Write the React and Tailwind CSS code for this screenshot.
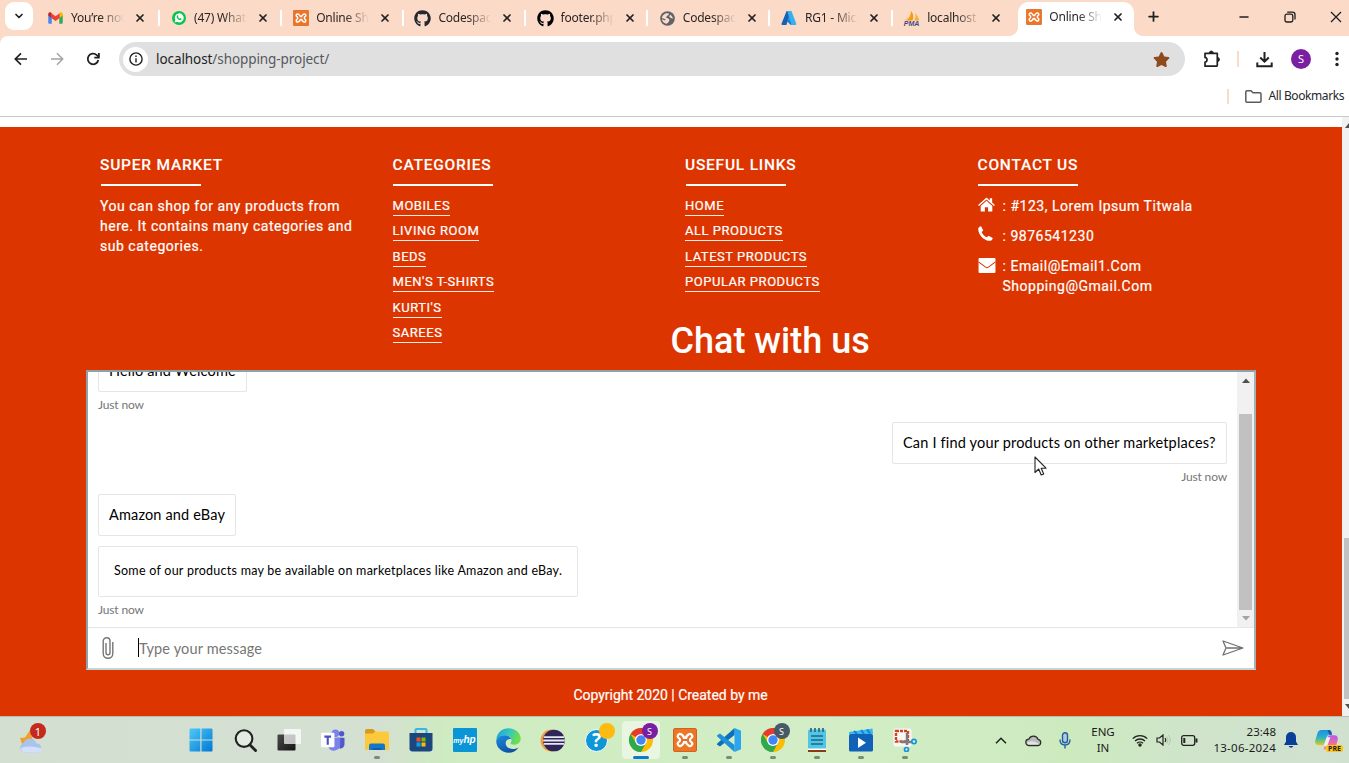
import React from "react";
import { FaGithub, FaStar } from "react-icons/fa";
import { ChevronDown, X, Plus, Minus } from "lucide-react";

/* ---------- brand icons ---------- */

const Gmail = () => (
  <svg viewBox="0 0 16 12" className="h-[12px] w-[15px]">
    <path d="M0.3 2v9a1 1 0 0 0 1 1H4V4.2z" fill="#4285f4" />
    <path d="M15.7 2v9a1 1 0 0 1-1 1H12V4.2z" fill="#34a853" />
    <path d="M12 1.6v4.6l3.7-2.8V1.6C15.7 0 13.6-.5 12.6.3z" fill="#fbbc04" />
    <path d="M0.3 1.6v1.8L4 6.2V1.4L3.4.3C2.4-.5.3 0 .3 1.6z" fill="#c5221f" />
    <path d="M3.6.8L8 4.1 12.4.8V5.9L8 9.2 3.6 5.9z" fill="#ea4335" />
  </svg>
);

const WhatsApp = () => (
  <svg viewBox="0 0 14 14" className="size-[14px]">
    <circle cx="7" cy="7" r="7" fill="#06c54b" />
    <path d="M2.6 11.5l.7-2.5A4.5 4.5 0 1 1 5.1 10.8z" fill="#fff" />
    <path d="M5.2 4.6c.6-.6.9-.3 1.2.7l-.4.7c.4.9 1 1.3 1.7 1.7l.6-.6 1.2.6c0 1.3-1.4 1.6-2.6 1C5.6 8.1 4.8 7 4.7 5.9c0-.6.2-1 .5-1.3z" fill="#06c54b" />
  </svg>
);

const Xampp = ({ className = "size-[16px]" }) => (
  <svg viewBox="0 0 24 24" className={className}>
    <rect x="0.5" y="0.5" width="23" height="23" rx="1.5" fill="#ee7426" stroke="#cf6420" />
    <g fill="none" strokeLinecap="round" strokeLinejoin="round">
      <path d="M7 8.2C10 10 10 14 7 15.8M17 8.2C14 10 14 14 17 15.8M9.300 12h5.400" stroke="#fff" strokeWidth="6.6" />
      <path d="M7 8.2C10 10 10 14 7 15.8M17 8.2C14 10 14 14 17 15.8M9.300 12h5.400" stroke="#e8702a" strokeWidth="2.2" />
    </g>
  </svg>
);

const Globe = () => (
  <svg viewBox="0 0 16 16" className="size-[15px]">
    <circle cx="8" cy="8" r="7.8" fill="#5f6368" />
    <path d="M2 7.5C2.4 4.5 5 2.3 8 2.3c1.6 0 2 .8 1.2 1.8L7.5 5.3 6.3 6.8 8.8 8l1.4 1.3-1 2.3-2 1.9C4.3 13 2.3 11 2 8.7L5.3 10 6 8.8z" fill="#fbdccb" />
    <path d="M11 3.6l2.3 2.7.3 2-2-.8-1.8-1.3z" fill="#fbdccb" />
  </svg>
);

const Azure = () => (
  <svg viewBox="0 0 16 16" className="size-[16px]">
    <path d="M5.6 1h4.6L5.4 15H1.3A.9.9 0 0 1 .5 13.8z" fill="#1464b4" />
    <path d="M12 10H5.2l4.3 4.7 2.8.3z" fill="#0b66c3" />
    <path d="M6.2 1h4.2l4.9 12.8a.9.9 0 0 1-.8 1.2h-4.2z" fill="#35b1f0" />
    <path d="M6.8 1.5L8 7.5 6.500 10.500 10 13.500" fill="#1d8be0" />
  </svg>
);

const Pma = () => (
  <span className="flex h-[15px] w-[17px] flex-col items-center">
    <svg viewBox="0 0 16 10" className="h-[10px] w-[16px]">
      <path d="M7 0c3 3 2.5 7 1.500 9.500H2.500C5 7.500 7 4 7 0z" fill="#f89c0e" />
      <path d="M11.500 2c2 2.500 3 5 4 7.500H10c1.500-2 1.800-5 1.500-7.500z" fill="#fbb03b" />
      <path d="M4.500 3c0 3-1 5-4 6.500h3z" fill="#f9b65a" />
    </svg>
    <span className="font-['Liberation_Sans'] text-[7px] font-bold italic leading-[5px] text-[#3c4a86]">PMA</span>
  </span>
);

/* ---------- browser chrome ---------- */

const TABS = [
  { icon: <Gmail />, title: "You’re now" },
  { icon: <WhatsApp />, title: "(47) Whats" },
  { icon: <Xampp />, title: "Online Sho" },
  { icon: <FaGithub className="size-[17px] text-[#24292f]" />, title: "Codespace" },
  { icon: <FaGithub className="size-[17px] text-black" />, title: "footer.php" },
  { icon: <Globe />, title: "Codespace" },
  { icon: <Azure />, title: "RG1 - Micr" },
  { icon: <Pma />, title: "localhost" },
];

function TabBody({ icon, title }) {
  return (
    <>
      <span className="flex w-[17px] justify-center">{icon}</span>
      <span className="ml-[7px] w-[53px] overflow-hidden whitespace-nowrap text-[12px] tracking-[-0.2px] text-[#2b2523] [mask-image:linear-gradient(to_right,#000_55%,transparent)]">
        {title}
      </span>
      <X className="ml-[10px] size-[12px] text-[#222]" strokeWidth={3.4} />
    </>
  );
}

function TabStrip() {
  return (
    <div className="flex h-[36px] items-center bg-[#fbdac8]">
      <button className="ml-[5px] mt-[2px] flex h-[28px] w-[28px] items-center justify-center self-start rounded-[9px] bg-white">
        <ChevronDown className="size-[12px] text-[#222]" strokeWidth={3.4} />
      </button>
      <div className="ml-[4px] flex h-[32px] items-center pr-px">
        {TABS.map((t, i) => (
          <div key={i} className={i === 0 ? "flex w-[122.5px] items-center pl-[10px]" : "flex w-[122.2px] items-center pl-[10.5px]"}>
            <TabBody {...t} />
            <span className={i === 7 ? "hidden" : "ml-auto h-[16px] w-[2px] bg-white"} />
          </div>
        ))}
      </div>
      <div className="relative ml-[2px] flex h-[34px] w-[116px] items-center self-end rounded-t-[11px] bg-white pb-[4px] pl-[7.500px]">
        <span className="absolute -left-[10px] bottom-0 size-[10px] bg-[radial-gradient(circle_at_0_0,transparent_10px,#fff_10.500px)]" />
        <span className="absolute -right-[10px] bottom-0 size-[10px] bg-[radial-gradient(circle_at_100%_0,transparent_10px,#fff_10.500px)]" />
        <TabBody icon={<Xampp />} title="Online Sho" />
      </div>
      <div className="flex h-[33px] flex-1 items-center self-start text-[#1f1f1f]">
        <Plus className="ml-[12px] size-[15px]" strokeWidth={2.8} />
        <Minus className="ml-[76px] size-[14px]" strokeWidth={2.2} />
        <svg viewBox="0 0 12 12" className="ml-[33px] size-[12px]" fill="none" stroke="currentColor" strokeWidth="1.300">
          <rect x="1" y="3.2" width="7.8" height="7.8" rx="1.8" />
          <path d="M3.2 1.1h5.3a2.5 2.5 0 0 1 2.5 2.5v5" />
        </svg>
        <svg viewBox="0 0 12 12" className="ml-[34px] size-[12px]" fill="none" stroke="currentColor" strokeWidth="1.3">
          <path d="M1 1l10 10M11 1L1 11" />
        </svg>
      </div>
    </div>
  );
}

function Toolbar() {
  return (
    <div className="bg-[#fbdac8]">
      <div className="flex h-[46px] items-center rounded-tl-[8px] bg-white text-[#1f1f1f]">
        <svg viewBox="0 0 14 14" className="ml-[14px] size-[14px]" fill="none" stroke="#202124" strokeWidth="1.7">
          <path d="M13 7H1.500M7 1.300L1.300 7 7 12.700" />
        </svg>
        <svg viewBox="0 0 14 14" className="ml-[22px] size-[14px]" fill="none" stroke="#a3a3a3" strokeWidth="1.5">
          <path d="M1 7h11.500M7 1.300L12.700 7 7 12.700" />
        </svg>
        <svg viewBox="0 0 14 14" className="ml-[22px] size-[14px]" fill="none" stroke="#202124" strokeWidth="1.8">
          <path d="M12.3 8A5.3 5.3 0 1 1 10.8 3.2L12.3 4.7" />
          <path d="M12.9 1v4.6H8.3" />
        </svg>
        <div className="ml-[19px] flex h-[34px] w-[1065.5px] items-center rounded-full bg-[#e0e0e0] pl-[4px]">
          <span className="flex size-[25px] items-center justify-center rounded-full bg-white">
            <svg viewBox="0 0 14 14" className="size-[14px]" fill="none" stroke="#202124" strokeWidth="1.4">
              <circle cx="7" cy="7" r="6.1" />
              <path d="M7 6.200v4.200M7 3.500v1.500" />
            </svg>
          </span>
          <span className="ml-[8px] text-[13.500px] tracking-[-0.080px] text-[#55595e]">
            <span className="text-[#1f1f1f]">localhost</span>/shopping-project/
          </span>
          <FaStar className="ml-auto mr-[15px] size-[17px] text-[#8f4a1d]" />
        </div>
        <svg viewBox="0 0 18 18" className="ml-[18.5px] size-[18px]" fill="none" stroke="#202124" strokeWidth="1.7" strokeLinejoin="round">
          <path d="M2 3.300h12.300v11.900a1 1 0 0 1-1 1H2v-4.100c2.400 0 2.900-4.700 0-4.700z" />
          <path d="M6.300 3a2 2 0 0 1 4 0zM14.500 7.500a2 2 0 0 1 0 4z" fill="#202124" strokeWidth="0.8" />
        </svg>
        <span className="ml-[15.5px] h-[16px] w-[2px] bg-[#fbdac8]" />
        <svg viewBox="0 0 17 17" className="ml-[17.5px] size-[17px]" fill="none" stroke="#202124" strokeWidth="2">
          <path d="M8.500 1v9.500M4.200 6.500l4.300 4.200 4.300-4.200M1.300 11.500v3.700h14.400v-3.700" />
        </svg>
        <span className="ml-[18px] flex size-[20px] items-center justify-center rounded-full bg-[#7b1fa2] text-[11px] text-white">S</span>
        <svg viewBox="0 0 4 16" className="ml-[24px] h-[16px] w-[4px]" fill="#202124">
          <circle cx="2" cy="2.500" r="1.7" /><circle cx="2" cy="8" r="1.7" /><circle cx="2" cy="13.500" r="1.7" />
        </svg>
      </div>
      <div className="flex h-[35px] items-center justify-end border-b border-[#c9c9c9] bg-white pb-[6px] pr-[4.5px]">
        <span className="h-[15px] w-[2px] bg-[#fbdac8]" />
        <svg viewBox="0 0 17 13" className="ml-[16px] h-[13px] w-[17px]" fill="none" stroke="#5b5b5b" strokeWidth="1.5">
          <path d="M.8 2A1.200 1.200 0 0 1 2 .8h4l2 1.900h6.800A1.200 1.200 0 0 1 16 3.900V11a1.200 1.200 0 0 1-1.200 1.200H2A1.200 1.200 0 0 1 .8 11z" />
        </svg>
        <span className="ml-[7px] w-[76px] whitespace-nowrap text-[12px] tracking-[-0.400px] text-[#26282c]">All Bookmarks</span>
      </div>
    </div>
  );
}

/* ---------- footer ---------- */

function Column({ title, children }) {
  return (
    <div className="w-[292.5px]">
      <h3 className="h-[28px] text-[15.5px] font-medium leading-[18px] tracking-[0.780px] [-webkit-text-stroke:0.100px]">{title}</h3>
      <div className="ml-[0.5px] h-[2px] w-[100px] bg-white" />
      <div className="mt-[9px]">{children}</div>
    </div>
  );
}

function Links({ items }) {
  return (
    <ul>
      {items.map((l) => (
        <li key={l} className="h-[25.6px]">
          <a className="inline-block border-b border-white/90 text-[13px] font-normal leading-[18px] tracking-[0.530px] [-webkit-text-stroke:0.200px]">{l}</a>
        </li>
      ))}
    </ul>
  );
}

function Contact({ icon, children }) {
  return (
    <div className="mb-[10px] flex leading-[20px]">
      <span className="flex h-[20px] w-[25px] items-center">{icon}</span>
      <span>{children}</span>
    </div>
  );
}

function Footer() {
  return (
    <div className="flex h-[194px] pl-[100px] pt-[29px] text-[14px] tracking-[0.520px] text-white [-webkit-text-stroke:0.200px]">
      <Column title="SUPER MARKET">
        <p className="whitespace-nowrap pt-[1px] leading-[20px]">
          You can shop for any products from<br />here. It contains many categories and<br />sub categories.
        </p>
      </Column>
      <Column title="CATEGORIES">
        <Links items={["MOBILES", "LIVING ROOM", "BEDS", "MEN'S T-SHIRTS", "KURTI'S", "SAREES"]} />
      </Column>
      <Column title="USEFUL LINKS">
        <Links items={["HOME", "ALL PRODUCTS", "LATEST PRODUCTS", "POPULAR PRODUCTS"]} />
      </Column>
      <Column title="CONTACT US">
        <div className="pt-[1px]">
          <Contact
            icon={
              <svg viewBox="0 0 18 16" className="-mt-[3px] h-[15px] w-[17px]" fill="#fff">
                <path d="M9 .5L0 8.500l1 1.200L9 2.700l8 7 1-1.200-3-2.700V1.200h-2.500v2.400z" />
                <path d="M9 4L2.800 9.500V15.500h4.500V11h3.400v4.500h4.500V9.500z" />
              </svg>
            }
          >
            : #123, Lorem Ipsum Titwala
          </Contact>
          <Contact
            icon={
              <svg viewBox="0 0 16 16" className="-mt-[4px] size-[15px]" fill="#fff">
                <path d="M.4 2.400C.8 1.100 2.200.3 3.300.3L5.600 4.700 3.900 6.400c1 2.500 3 4.600 5.700 5.700l1.700-1.700 4.400 2.300c0 1.100-.8 2.500-2.100 2.900C8 17.200-.8 8.800.4 2.400z" />
              </svg>
            }
          >
            : 9876541230
          </Contact>
          <Contact
            icon={
              <svg viewBox="0 0 18 16" className="h-[15px] w-[18px]">
                <rect width="18" height="16" rx="1" fill="#fff" />
                <path d="M0 4.200l7.500 5.600q1.500 1 3 0L18 4.200" fill="none" stroke="#dd3500" strokeWidth="1.1" />
              </svg>
            }
          >
            : Email@Email1.Com<br />Shopping@Gmail.Com
          </Contact>
        </div>
      </Column>
    </div>
  );
}

/* ---------- chat ---------- */

const Stamp = ({ className = "" }) => (
  <div className={"h-[26px] text-[12px] leading-[26px] tracking-[-0.150px] text-[#767676] " + className}>Just now</div>
);

const Bubble = ({ children, className = "h-[42px] px-[10px] text-[14.5px]" }) => (
  <div className={"flex items-center whitespace-nowrap rounded-[2px] border border-[#e6e6e6] bg-white text-black " + className}>
    {children}
  </div>
);

function Chat() {
  return (
    <div className="mx-auto flex h-[300px] w-[1170px] flex-col border-2 border-b-[#c3d5d6] border-l-[#8fa3a6] border-r-[#9fb4b8] border-t-[#8fa3a6] bg-white font-['Lato','Open_Sans',sans-serif]">
      <div className="flex h-[255px] overflow-hidden">
        <div className="flex-1 px-[10px]">
          <Bubble className="-mt-[22px] h-[42px] w-[149px] px-[10px] text-[14.5px] tracking-[0.160px]">Hello and Welcome</Bubble>
          <Stamp />
          <Bubble className="ml-auto mt-[4px] h-[42px] w-[335px] px-[10px] text-[14.5px] tracking-[0.180px]">
            Can I find your products on other marketplaces?
          </Bubble>
          <Stamp className="text-right" />
          <Bubble className="mt-[4px] h-[42px] w-[138px] px-[10px] text-[14.5px] tracking-[0.160px]">Amazon and eBay</Bubble>
          <Bubble className="mt-[10px] h-[51px] w-[480px] px-[15px] text-[12.5px] tracking-[0.260px]">
            Some of our products may be available on marketplaces like Amazon and eBay.
          </Bubble>
          <Stamp />
        </div>
        <div className="flex w-[17px] flex-col items-center bg-[#f1f1f1]">
          <svg viewBox="0 0 8 5" className="mt-[6px] h-[5px] w-[8px]"><path d="M0 5L4 .5 8 5z" fill="#505050" /></svg>
          <div className="mt-[31px] h-[196px] w-[13px] bg-[#c1c1c1]" />
          <svg viewBox="0 0 8 5" className="mt-[6px] h-[5px] w-[8px]"><path d="M0 0l4 4.500L8 0z" fill="#a3a3a3" /></svg>
        </div>
      </div>
      <div className="flex h-[41px] items-center border-t border-[#e6e6e6] pl-[14px] pr-[10px]">
        <svg viewBox="0 0 12 22" className="h-[22px] w-[12px]" fill="none" stroke="#767676" strokeWidth="1.4">
          <path d="M10.800 5v11.500a4.800 4.800 0 0 1-9.600 0V4.200a3.400 3.400 0 0 1 6.800 0v11.600a2 2 0 0 1-4 0V6" />
        </svg>
        <span className="ml-[24px] h-[19px] w-px bg-black" />
        <span className="pt-[3px] text-[14.5px] tracking-[0.150px] text-[#767676]">Type your message</span>
        <svg viewBox="0 0 22 16" className="ml-auto h-[16px] w-[22px]" fill="none" stroke="#707070" strokeWidth="1.3" strokeLinejoin="round">
          <path d="M1 1l20 7L1 15l3-7zM4 8h16" />
        </svg>
      </div>
    </div>
  );
}

/* ---------- taskbar ---------- */

const Windows = () => (
  <svg viewBox="0 0 24 24" className="size-[24px]">
    <defs><linearGradient id="win" x1="0" y1="0" x2="1" y2="1"><stop stopColor="#4fc9f8" /><stop offset="1" stopColor="#0078d4" /></linearGradient></defs>
    <path d="M.5 1.500q0-1 1-1h9.800v11H.5zM12.500.5h10q1 0 1 1v10h-11zM.5 12.500h10.800v11H1.500q-1 0-1-1zM12.500 12.500h11v10q0 1-1 1h-10z" fill="url(#win)" />
  </svg>
);

const SearchIcon = () => (
  <svg viewBox="0 0 24 24" className="ml-[1px] size-[23px]" fill="none" stroke="#222">
    <circle cx="10.500" cy="10" r="8.700" fill="#e3ebe2" strokeWidth="2.200" />
    <path d="M16.500 16.500l6 6" strokeWidth="3" strokeLinecap="round" />
  </svg>
);

const TaskView = () => (
  <svg viewBox="0 0 24 24" className="size-[24px]">
    <defs><linearGradient id="tv" x1="0" y1="0" x2="1" y2="1"><stop stopColor="#4b4b4b" /><stop offset="1" stopColor="#151515" /></linearGradient></defs>
    <rect x="0.500" y="6.500" width="18" height="16" rx="1" fill="url(#tv)" />
    <rect x="7" y="1" width="17" height="15" rx="1" fill="#fff" fillOpacity="0.72" />
  </svg>
);

const Teams = () => (
  <svg viewBox="0 0 26 24" className="h-[23px] w-[26px]">
    <circle cx="15.500" cy="4.500" r="4" fill="#7b83eb" /><circle cx="22" cy="5" r="2.800" fill="#5059c9" />
    <path d="M17 9h8v7a4.500 4.500 0 0 1-5 4.500z" fill="#5059c9" />
    <path d="M8 9h12.500v7.500a6.500 6.500 0 0 1-12.500 2z" fill="#7b83eb" />
    <rect x="0.500" y="4" width="14" height="15" rx="1" fill="#fff" />
    <path d="M4 8h7M7.500 8v8.500" stroke="#4b53bc" strokeWidth="2.200" />
  </svg>
);

const Explorer = () => (
  <svg viewBox="0 0 24 24" className="size-[24px]">
    <path d="M0 3q0-2 2-2h6l2.500 2.500V7H0z" fill="#d99a1c" />
    <path d="M0 5.500h8l2-2h12.500q1.500 0 1.500 1.500V21q0 1-1 1H1q-1 0-1-1z" fill="#fcc93c" />
    <path d="M4 22v-4.500q0-2 2-2h12q2 0 2 2V22z" fill="#1577c9" />
    <path d="M7.500 22v-2h9v2z" fill="#0f5ea8" />
  </svg>
);

const Store = () => (
  <svg viewBox="0 0 24 24" className="size-[24px]">
    <path d="M6.500 6V2q0-1 1-1h9q1 0 1 1v4" fill="none" stroke="#38b6ea" strokeWidth="2" />
    <path d="M.5 5h23v15.500q0 3-3 3h-17q-3 0-3-3z" fill="#1c477e" />
    <rect x="7.500" y="9.500" width="4" height="4" fill="#f25022" /><rect x="12.500" y="9.500" width="4" height="4" fill="#7fba00" />
    <rect x="7.500" y="14.500" width="4" height="4" fill="#00a4ef" /><rect x="12.500" y="14.500" width="4" height="4" fill="#ffb900" />
  </svg>
);

const MyHp = () => (
  <span className="flex size-[24px] items-center justify-center rounded-[1px] bg-[#0a96d6] font-['Liberation_Sans'] italic leading-none text-white">
    <span className="text-[7px] font-bold">my</span><span className="text-[10px] font-bold">hp</span>
  </span>
);

const Edge = () => (
  <svg viewBox="0 0 24 24" className="size-[25px]">
    <defs>
      <linearGradient id="eg" x1="0" y1="0" x2="1" y2="0.300"><stop stopColor="#1a9de0" /><stop offset="0.550" stopColor="#35c6c0" /><stop offset="1" stopColor="#6ede4c" /></linearGradient>
      <linearGradient id="eb" x1="0" y1="0" x2="0.600" y2="1"><stop stopColor="#1b8fdc" /><stop offset="1" stopColor="#0e4fa5" /></linearGradient>
    </defs>
    <path d="M.3 11C1 4.500 6 .3 12 .3c7 0 11.700 5 11.700 9.700 0 4-3 6-6 6-3.200 0-4.400-1-3.300-2.300 1.500-2-.2-6.700-5.400-6.700C5 7 1.500 9 .3 11z" fill="url(#eg)" />
    <path d="M.3 11.500C2 8 5.500 6.800 8.800 7c3.200.2 5.200 1.800 5.800 3.700-4-.7-6.200 2.300-5 5.600 1.200 3.500 6.500 5.500 12 2.300C19.500 22 16 23.700 12 23.700 5.500 23.700-.5 18 .3 11.500z" fill="url(#eb)" />
  </svg>
);

const Eclipse = () => (
  <svg viewBox="0 0 26 24" className="h-[23px] w-[25px]">
    <circle cx="12" cy="12" r="11.500" fill="#f39b3a" /><circle cx="14.500" cy="12" r="11.300" fill="#2f2558" />
    <path d="M4 8.500h21M3.300 12h22.400M4 15.500h21" stroke="#e8e8f2" strokeWidth="1.900" />
  </svg>
);

const Help = () => (
  <span className="relative flex size-[23px] items-center justify-center rounded-full border-[1.5px] border-white bg-[#0d96d8] text-[19px] font-bold leading-none text-white">
    ?
    <span className="absolute -right-[8px] -top-[7px] size-[16px] rounded-full bg-[#fdbb11]" />
  </span>
);

const Chrome = ({ badge }) => (
  <span className="relative size-[24px]">
    <svg viewBox="0 0 24 24" className="size-[24px]">
      <circle cx="12" cy="12" r="12" fill="#fbbc05" />
      <path d="M12 12L1.600 6A12 12 0 0 1 22.400 6z" fill="#e33b2e" />
      <path d="M1.600 6l5.600 9L12 17.500 12 24A12 12 0 0 1 1.600 6z" fill="#2da94f" />
      <path d="M12 24l5-9-5 2.500z" fill="#2da94f" />
      <circle cx="12" cy="12" r="6" fill="#fff" /><circle cx="12" cy="12" r="4.700" fill="#4285f4" />
    </svg>
    <span className={"absolute -right-[5px] -top-[5px] flex size-[16px] items-center justify-center rounded-full text-[9px] leading-none text-white " + badge}>S</span>
  </span>
);

const VsCode = () => (
  <svg viewBox="0 0 24 24" className="size-[24px]">
    <path d="M17.500 0L24 2.800v18.400L17.500 24z" fill="#2aa5f0" />
    <path d="M17.500 0v7L3 18.500 .5 17q-1-.7 0-1.700z" fill="#0b70ba" />
    <path d="M17.500 24v-7L3 5.500 .5 7q-1 .7 0 1.700z" fill="#2090d8" />
  </svg>
);

const Notepad = () => (
  <svg viewBox="0 0 20 24" className="h-[24px] w-[20px]">
    <rect x="1" y="1.500" width="18" height="20" rx="1.500" fill="#52c5e4" />
    <path d="M4 0v4M8 0v4M12 0v4M16 0v4" stroke="#286078" strokeWidth="1.600" />
    <path d="M4 8h12M4 12h12M4 16h12" stroke="#196a8c" strokeWidth="1.500" />
    <rect x="1" y="20.500" width="18" height="1.500" fill="#fff" /><rect x="1" y="22" width="18" height="2" fill="#8b3b12" />
  </svg>
);

const Movies = () => (
  <svg viewBox="0 0 24 24" className="size-[24px]">
    <path d="M0 4L23.500.5 24 6H0z" fill="#38b9ef" /><path d="M5 3l3 3M12 2l3 4M18 1.500l3 4" stroke="#1583cf" strokeWidth="2" />
    <rect y="6" width="24" height="17.500" rx="1.500" fill="#1061b8" />
    <path d="M9 9.500v10.500l8-5.200z" fill="#fff" />
  </svg>
);

const Snip = () => (
  <svg viewBox="0 0 24 24" className="size-[24px]">
    <rect x="0.500" y="0.500" width="18" height="18" rx="2" fill="#f7f7f7" />
    <rect x="3" y="3" width="12" height="10.500" fill="none" stroke="#cf4520" strokeWidth="2.400" strokeDasharray="3 1" />
    <path d="M14 5v12M8 14h12" stroke="#7c7c7c" strokeWidth="2.500" />
    <circle cx="21" cy="13.500" r="2.200" fill="#bff" stroke="#1b93d2" strokeWidth="1.700" /><circle cx="13.500" cy="21.500" r="2" fill="#bff" stroke="#1b93d2" strokeWidth="1.700" />
  </svg>
);

const APPS = [
  { el: <Windows /> }, { el: <SearchIcon /> }, { el: <TaskView /> }, { el: <Teams /> },
  { el: <Explorer />, dot: true }, { el: <Store /> }, { el: <MyHp /> }, { el: <Edge /> },
  { el: <Eclipse /> }, { el: <Help /> }, { el: <Chrome badge="bg-[#7b1fa2]" />, active: true },
  { el: <Xampp className="size-[24px]" />, dot: true }, { el: <VsCode />, dot: true },
  { el: <Chrome badge="bg-[#455a64]" />, dot: true }, { el: <Notepad />, dot: true },
  { el: <Movies />, dot: true }, { el: <Snip />, dot: true },
];

function Taskbar() {
  return (
    <div className="flex h-[47px] items-center border-t border-[#b7bfae] bg-[linear-gradient(90deg,#d3dfd0_0%,#d4e0d2_28%,#ceebc1_33%,#d3eec6_60%,#cdeabf_80%,#cfe4ca_88%,#d1e1d0_100%)] text-[#1b1b1b]">
      <div className="relative ml-[18px] h-[32px] w-[30px]">
        <svg viewBox="0 0 26 26" className="mt-[5px] size-[26px]">
          <path d="M2 9l5-.5L12 1l3 11-11 3z" fill="#f0a12c" />
          <path d="M6 23.500a5 5 0 0 1-.5-9.500 7 7 0 0 1 13 .5 4.600 4.600 0 0 1 1.500 9z" fill="#a9c3ee" />
          <path d="M3 19q9-3 21 .5a4.600 4.600 0 0 1-4 4H6q-3-1-3-4.500z" fill="#d3e0fa" />
        </svg>
        <span className="absolute -top-[1px] left-[12px] flex size-[16px] items-center justify-center rounded-full bg-[#c5281c] text-[11px] leading-none text-white">1</span>
      </div>
      <div className="ml-[130.5px] flex h-full">
        {APPS.map((a, i) => (
          <div key={i} className="relative flex h-full w-[44px] items-center justify-center">
            <div className={a.active ? "flex h-[38px] w-[38px] items-center justify-center rounded-[4px] bg-white/50" : "flex items-center justify-center"}>{a.el}</div>
            {a.dot && <span className="absolute bottom-[4px] h-[3px] w-[6px] rounded-full bg-[#7b8a79]" />}
            {a.active && <span className="absolute bottom-[4px] h-[3px] w-[16px] rounded-full bg-[#1277cf]" />}
          </div>
        ))}
      </div>
      <div className="ml-auto flex h-full items-center text-[11.5px]">
        <span className="flex w-[32px] justify-center">
          <svg viewBox="0 0 12 7" className="h-[7px] w-[12px]" fill="none" stroke="#222" strokeWidth="1.500"><path d="M1 6.200l5-5 5 5" /></svg>
        </span>
        <span className="flex w-[32px] justify-center">
          <svg viewBox="0 0 18 13" className="h-[13px] w-[17px]"><path d="M4.500 12a3.500 3.500 0 0 1-.3-7 5.200 5.200 0 0 1 9.600.3A3.400 3.400 0 0 1 13.800 12z" fill="#b9bcb9" stroke="#2a2a2a" strokeWidth="1.300" /><path d="M2 9q5-4 13.500 1.500H3z" fill="#e4e4e4" /></svg>
        </span>
        <span className="flex w-[32px] justify-center">
          <svg viewBox="0 0 12 17" className="h-[17px] w-[12px]" fill="none" stroke="#245ea0" strokeWidth="1.400"><rect x="3.500" y="0.800" width="5" height="10" rx="2.500" fill="#aecbe0" /><path d="M1 7.500q0 5.500 5 5.500t5-5.500M6 13v3.500" /></svg>
        </span>
        <span className="w-[44px] text-center leading-[16px]">ENG<br />IN</span>
        <span className="flex w-[30px] justify-center">
          <svg viewBox="0 0 16 13" className="h-[13px] w-[16px]" fill="none" stroke="#222" strokeWidth="1.300"><path d="M.8 4.600a10.300 10.300 0 0 1 14.400 0M3 7a7.200 7.200 0 0 1 10 0M5 9.300a4.300 4.300 0 0 1 6 0" /><circle cx="8" cy="11" r="1.100" fill="#222" /></svg>
        </span>
        <span className="flex w-[17px] justify-center">
          <svg viewBox="0 0 17 12" className="h-[12px] w-[17px]" fill="none" stroke="#222" strokeWidth="1.200"><path d="M2 4h2.500L8 1v10L4.500 8H2zM10 4q1.400 2 0 4" /><path d="M11.800 2.500q2.500 3.500 0 7M13.500 1q3.500 5 0 10" stroke="#b4c6b0" strokeWidth="1" /></svg>
        </span>
        <span className="flex w-[34px] justify-center">
          <svg viewBox="0 0 17 11" className="h-[11px] w-[17px]" fill="none" stroke="#222" strokeWidth="1.300"><rect x="0.700" y="0.700" width="13" height="9.600" rx="2" /><path d="M3.300 3v5" strokeWidth="2" /><path d="M15.500 3.500v4" strokeWidth="2" /></svg>
        </span>
        <span className="w-[70px] whitespace-nowrap text-right leading-[16px]">23:48<br /><span className="tracking-[0.250px]">13-06-2024</span></span>
        <span className="flex w-[30px] justify-center">
          <svg viewBox="0 0 14 16" className="h-[16px] w-[14px]" fill="#0a3f97"><path d="M7 0a5 5 0 0 1 5 5v4.500l2 3.500H0l2-3.500V5a5 5 0 0 1 5-5zM4.700 14h4.600q-.6 1.800-2.300 1.800T4.700 14z" /></svg>
        </span>
        <span className="relative flex w-[43px] justify-center">
          <svg viewBox="0 0 24 22" className="mr-[2px] h-[22px] w-[23px]">
            <defs>
              <linearGradient id="cpa" x1="0" y1="0" x2="0" y2="1"><stop stopColor="#1c8fe0" /><stop offset="0.500" stopColor="#2fb1c8" /><stop offset="0.750" stopColor="#7cc95a" /><stop offset="1" stopColor="#f2c230" /></linearGradient>
              <linearGradient id="cpb" x1="0" y1="0" x2="0" y2="1"><stop stopColor="#b55be6" /><stop offset="0.600" stopColor="#ee6fa0" /><stop offset="1" stopColor="#f79a62" /></linearGradient>
            </defs>
            <path d="M7 .5h7.500q2 0 2.500 2l.8 3H15q-2 0-2.700 2L9 16.500H4q-4.500 0-3.700-5L2.500 4Q3.500.5 7 .5z" fill="url(#cpa)" />
            <path d="M13 .5h1.500q2 0 2.500 2l.8 3H15z" fill="#1d57b8" />
            <path d="M9 20l4-12q.7-2 2.700-2H20q4.500 0 3.700 5L22 17q-1 4-4.500 4H9z" fill="url(#cpb)" />
            <path d="M12.300 8l3.700 0-3.300 9.500H9.300z" fill="#f3eefa" />
          </svg>
          <span className="absolute bottom-[-1px] right-[6px] rounded-[2px] bg-[#fcc419] px-[2px] font-['Open_Sans'] text-[7px] font-bold leading-[7px] text-[#222]">PRE</span>
        </span>
      </div>
    </div>
  );
}

export default function App() {
  return (
    <div className="relative flex h-[763px] w-[1349px] flex-col overflow-hidden bg-white font-['Noto_Sans','Open_Sans',sans-serif]">
      <TabStrip />
      <Toolbar />
      <div className="flex h-[599px]">
        <div className="w-[1342px] pt-[9.5px]">
          <div className="h-[590px] bg-[#dd3500] font-['Roboto',sans-serif]">
            <Footer />
            <h1 className="h-[49px] pl-[670.5px] text-[36px] font-medium leading-[40px] text-white">Chat with us</h1>
            <Chat />
            <p className="pr-px pt-[15px] text-center text-[14px] leading-[20px] tracking-[-0.020px] text-white [-webkit-text-stroke:0.200px]">Copyright 2020 | Created by me</p>
          </div>
        </div>
        <div className="flex w-[7px] flex-col bg-[#f1f1f1]">
          <svg viewBox="0 0 4 5" className="ml-auto mt-[6px] h-[5px] w-[4px]"><path d="M0 5L4 0v5z" fill="#505050" /></svg>
          <div className="ml-[2px] mt-[410px] h-[161px] bg-[#c1c1c1]" />
          <svg viewBox="0 0 4 5" className="ml-auto mt-[5px] h-[5px] w-[4px]"><path d="M0 0l4 5V0z" fill="#505050" /></svg>
        </div>
      </div>
      <Taskbar />
      <svg viewBox="0 0 13 20" className="absolute left-[1034px] top-[456px] h-[20px] w-[13px]">
        <path d="M1 1v15.500l3.700-3.500 2.500 6 2.500-1-2.500-5.800H12z" fill="#fff" stroke="#222" strokeWidth="1.100" strokeLinejoin="round" />
      </svg>
    </div>
  );
}
